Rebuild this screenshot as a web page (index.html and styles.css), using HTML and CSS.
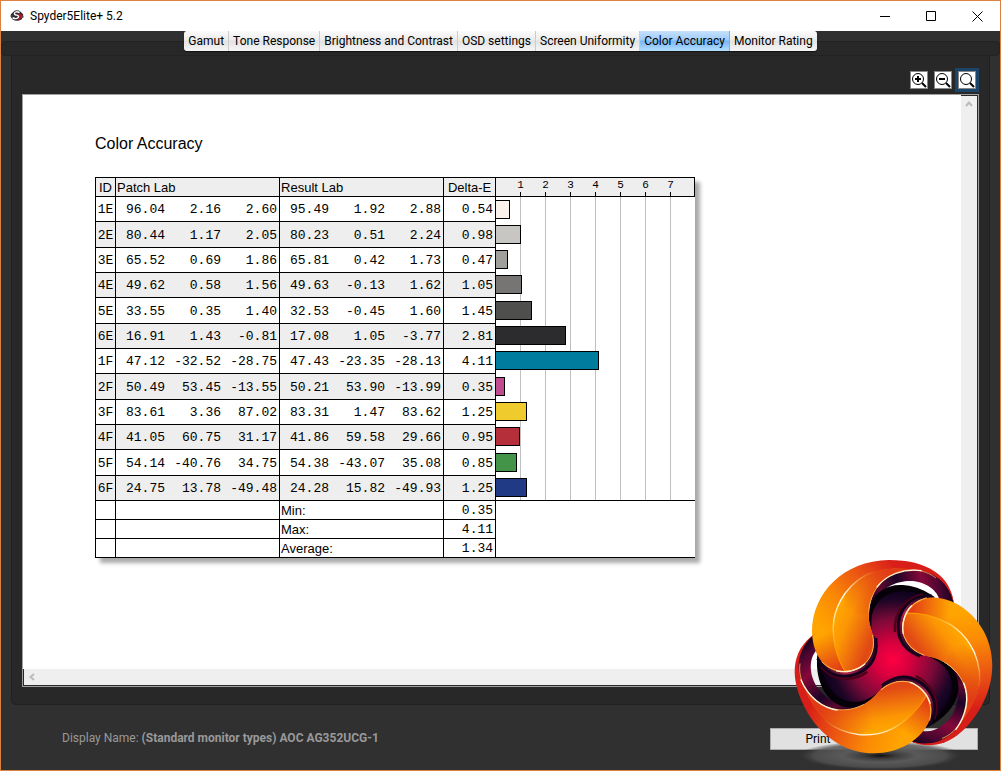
FILE: index.html
```
<!DOCTYPE html>
<html lang="en">

<head>
  <meta charset="UTF-8">
  <title>Spyder5Elite+ 5.2</title>
  <link rel="stylesheet" href="styles.css">
</head>

<body>
  <div class="window">
    <header class="titlebar">
      <svg class="app-icon" viewBox="0 0 16 16">
        <path d="M4 3 Q8 0 12 3 L15 6 Q16 9 13 12 Q8 15 3 12 Q0 9 1 6 Z" fill="#2c2a2c" />
        <path d="M9 5 L14 6 Q15 10 10 13 L9 11 Q11 9 9 8 Z" fill="#a5182c" />
        <path d="M11 4 Q6 2 5 5 Q5 7 8 7 Q11 8 9 10 Q7 12 3 10" fill="none" stroke="#fff" stroke-width="1.6" />
        <path d="M0 8 H3 M13 9 H16" stroke="#666" stroke-width="1" />
      </svg>
      <span class="app-name">Spyder5Elite+ 5.2</span>
      <div class="window-buttons">
        <button type="button" aria-label="Minimize"><svg viewBox="0 0 11 11"><path d="M0 5.5H10" /></svg></button>
        <button type="button" aria-label="Maximize"><svg viewBox="0 0 11 11"><path d="M.5 .5H9.5V9.5H.5Z" /></svg></button>
        <button type="button" aria-label="Close"><svg viewBox="0 0 11 11"><path d="M.5 .5L10.5 10.5M10.5 .5L.5 10.5" /></svg></button>
      </div>
    </header>

    <nav class="tabs">
      <div class="tab-list" role="tablist">
        <button type="button" role="tab">Gamut</button>
        <button type="button" role="tab">Tone Response</button>
        <button type="button" role="tab">Brightness and Contrast</button>
        <button type="button" role="tab">OSD settings</button>
        <button type="button" role="tab">Screen Uniformity</button>
        <button type="button" role="tab" class="active" aria-selected="true">Color Accuracy</button>
        <button type="button" role="tab">Monitor Rating</button>
      </div>
    </nav>

    <main class="panel">
      <div class="toolbar">
        <button type="button" aria-label="Zoom in"><svg viewBox="0 0 16 16"><circle cx="7" cy="7" r="5.5" /><path class="handle" d="M11 11L15 15" /><path class="sign" d="M4 7H10M7 4V10" /></svg></button>
        <button type="button" aria-label="Zoom out"><svg viewBox="0 0 16 16"><circle cx="7" cy="7" r="5.5" /><path class="handle" d="M11 11L15 15" /><path class="sign" d="M4 7H10" /></svg></button>
        <button type="button" class="focused" aria-label="Zoom to fit"><svg viewBox="0 0 16 16"><circle cx="7" cy="7" r="5.5" /><path class="handle" d="M11 11L15 15" /></svg></button>
      </div>

      <div class="viewer">
        <div class="report">
          <h1>Color Accuracy</h1>
          <table class="results">
            <colgroup>
              <col class="col-id">
              <col class="col-l"><col class="col-a"><col class="col-b">
              <col class="col-l"><col class="col-a"><col class="col-b">
              <col class="col-delta">
              <col class="col-chart">
            </colgroup>
            <thead>
              <tr>
                <th class="id">ID</th>
                <th colspan="3">Patch Lab</th>
                <th colspan="3">Result Lab</th>
                <th class="delta">Delta-E</th>
                <th class="scale"><div class="ticks"><span>1</span><span>2</span><span>3</span><span>4</span><span>5</span><span>6</span><span>7</span></div></th>
              </tr>
            </thead>
            <tbody id="patches"></tbody>
            <tfoot>
              <tr><td></td><td colspan="3"></td><th colspan="3">Min:</th><td class="num">0.35</td><td class="blank" rowspan="3"></td></tr>
              <tr><td></td><td colspan="3"></td><th colspan="3">Max:</th><td class="num">4.11</td></tr>
              <tr><td></td><td colspan="3"></td><th colspan="3">Average:</th><td class="num">1.34</td></tr>
            </tfoot>
          </table>
        </div>
        <div class="scroll-v"><button type="button" aria-label="Scroll up"><svg viewBox="0 0 8 8"><path d="M1 6L4 2.5L7 6" /></svg></button></div>
        <div class="scroll-h"><button type="button" aria-label="Scroll left"><svg viewBox="0 0 8 8"><path d="M6 1L2.5 4L6 7" /></svg></button></div>
      </div>
    </main>

    <footer class="footer">
      <p>Display Name: <strong>(Standard monitor types) AOC AG352UCG-1</strong></p>
      <div class="actions">
        <button type="button">Print</button>
        <button type="button">Close</button>
      </div>
    </footer>

    <svg class="logo" viewBox="0 0 663 663" aria-hidden="true">
      <defs>
        <radialGradient id="floor">
          <stop offset="0" stop-color="#111" />
          <stop offset=".2" stop-color="#3c3c3c" />
          <stop offset=".45" stop-color="#5a5a5a" />
          <stop offset=".8" stop-color="#525252" stop-opacity=".8" />
          <stop offset="1" stop-color="#303030" stop-opacity="0" />
        </radialGradient>
        <radialGradient id="core" gradientUnits="userSpaceOnUse" cx="338" cy="330" r="205">
          <stop offset="0" stop-color="#ff0042" />
          <stop offset=".25" stop-color="#d8003e" />
          <stop offset=".6" stop-color="#7c0a38" />
          <stop offset=".88" stop-color="#1d0526" />
          <stop offset="1" stop-color="#10021f" />
        </radialGradient>
        <linearGradient id="outer" gradientUnits="userSpaceOnUse" x1="130" y1="240" x2="350" y2="50">
          <stop offset="0" stop-color="#ffa400" />
          <stop offset=".3" stop-color="#fb8a05" />
          <stop offset=".7" stop-color="#e84e14" />
          <stop offset="1" stop-color="#d81e18" />
        </linearGradient>
        <linearGradient id="shade" gradientUnits="userSpaceOnUse" x1="120" y1="220" x2="200" y2="370">
          <stop offset=".2" stop-color="#dd2a18" stop-opacity="0" />
          <stop offset="1" stop-color="#dd2a18" />
        </linearGradient>
        <linearGradient id="inner" gradientUnits="userSpaceOnUse" x1="165" y1="190" x2="285" y2="240">
          <stop offset="0" stop-color="#ffa800" />
          <stop offset=".35" stop-color="#fc9604" />
          <stop offset="1" stop-color="#e24a15" />
        </linearGradient>
        <linearGradient id="innerTop" gradientUnits="userSpaceOnUse" x1="210" y1="190" x2="310" y2="50">
          <stop offset="0" stop-color="#e44a14" stop-opacity="0" />
          <stop offset="1" stop-color="#e03a16" />
        </linearGradient>
        <linearGradient id="ring" gradientUnits="userSpaceOnUse" x1="270" y1="160" x2="520" y2="120">
          <stop offset="0" stop-color="#170020" />
          <stop offset=".15" stop-color="#5d0a30" />
          <stop offset=".35" stop-color="#1c0426" />
          <stop offset=".65" stop-color="#85083a" />
          <stop offset=".85" stop-color="#4a0630" />
          <stop offset="1" stop-color="#0d001c" />
        </linearGradient>
        <linearGradient id="lip" gradientUnits="userSpaceOnUse" x1="130" y1="350" x2="300" y2="300">
          <stop offset="0" stop-color="#1a0424" />
          <stop offset=".35" stop-color="#b02650" />
          <stop offset=".6" stop-color="#6a0c38" />
          <stop offset="1" stop-color="#1a0424" />
        </linearGradient>
        <linearGradient id="glow" gradientUnits="userSpaceOnUse" x1="175" y1="300" x2="290" y2="60">
          <stop offset="0" stop-color="#ffd060" stop-opacity="0" />
          <stop offset=".3" stop-color="#ffe7a0" />
          <stop offset=".6" stop-color="#fff" />
          <stop offset="1" stop-color="#ffc040" stop-opacity="0" />
        </linearGradient>

        <path id="tail" fill="url(#ring)" d="M272 235 C255 165 285 90 345 66 C425 38 510 70 523 168 L478 148 C468 112 420 88 375 94 C335 100 300 118 278 170 Z" />
        <path id="body-back" fill="#060008" d="M262 270 C272 240 262 200 272 165 C285 125 325 100 375 106 C410 110 435 122 465 142 L400 170 C350 215 390 310 470 325 L338 400 Z" />
        <path id="body" fill="url(#core)" d="M255 340 C290 290 268 240 276 195 C288 146 325 126 365 124 C395 124 420 130 440 145 L375 165 C335 215 352 300 450 322 L338 430 Z" />
        <g id="lip-band" fill="none">
          <path stroke="#4d0018" stroke-width="7" d="M122 350 C160 394 220 396 262 366" />
          <path stroke="#14021c" stroke-width="24" d="M120 322 C147 382 225 386 265 338 C280 320 284 295 280 265" />
          <path stroke="url(#lip)" stroke-width="14" d="M128 330 C155 380 225 377 262 336 C280 314 284 290 278 260" />
        </g>
        <g id="arm">
          <path fill="url(#outer)" d="M523 168 C515 75 440 30 327 30 C190 32 96 130 96 245 C98 320 140 368 195 367 C250 362 280 322 281 278 C281 245 264 225 266 188 C268 130 305 80 362 64 C440 46 508 85 523 168 Z" />
          <path fill="url(#shade)" d="M96 245 C98 320 140 368 195 367 C150 290 150 220 175 160 L100 200 Z" />
          <path fill="url(#inner)" d="M195 362 C150 285 145 200 195 130 C235 78 295 48 385 57 C310 70 268 125 266 188 C264 225 281 245 281 278 C280 322 250 360 195 362 Z" />
          <path fill="url(#innerTop)" d="M195 130 C235 78 295 48 385 57 C310 70 268 125 266 188 L190 200 Z" />
          <path fill="none" stroke="url(#glow)" stroke-width="4" d="M172 310 C148 235 160 180 195 130 C220 97 250 75 285 62" />
          <path fill="none" stroke="#ffc65a" stroke-width="2" d="M266 188 C268 130 305 80 362 64 C400 54 440 62 468 84" />
          <path fill="none" stroke="#fff8dc" stroke-width="4" d="M290 112 C318 75 370 55 425 62" />
          <path fill="none" stroke="#ffb648" stroke-width="3" d="M125 335 C165 375 225 372 258 338 C280 312 284 285 278 255" />
          <path fill="none" stroke="#fff3cf" stroke-width="4" d="M168 362 C200 371 235 359 255 341" />
        </g>
      </defs>
      <ellipse cx="300" cy="617" rx="250" ry="44" fill="url(#floor)" />
      <use href="#tail" />
      <use href="#tail" transform="rotate(120 338 330)" />
      <use href="#tail" transform="rotate(240 338 330)" />
      <use href="#body-back" />
      <use href="#body-back" transform="rotate(120 338 330)" />
      <use href="#body-back" transform="rotate(240 338 330)" />
      <use href="#body" />
      <use href="#body" transform="rotate(120 338 330)" />
      <use href="#body" transform="rotate(240 338 330)" />
      <use href="#lip-band" />
      <use href="#lip-band" transform="rotate(120 338 330)" />
      <use href="#lip-band" transform="rotate(240 338 330)" />
      <use href="#arm" />
      <use href="#arm" transform="rotate(120 338 330)" />
      <use href="#arm" transform="rotate(240 338 330)" />
    </svg>
  </div>

  <script>
    // id, patch L a b, result L a b, delta-E, bar color
    const patches = [
      ['1E', '96.04', '2.16', '2.60', '95.49', '1.92', '2.88', '0.54', '#faf0ec'],
      ['2E', '80.44', '1.17', '2.05', '80.23', '0.51', '2.24', '0.98', '#c8c6c2'],
      ['3E', '65.52', '0.69', '1.86', '65.81', '0.42', '1.73', '0.47', '#a09f9b'],
      ['4E', '49.62', '0.58', '1.56', '49.63', '-0.13', '1.62', '1.05', '#777573'],
      ['5E', '33.55', '0.35', '1.40', '32.53', '-0.45', '1.60', '1.45', '#4f4f4d'],
      ['6E', '16.91', '1.43', '-0.81', '17.08', '1.05', '-3.77', '2.81', '#2c2b2d'],
      ['1F', '47.12', '-32.52', '-28.75', '47.43', '-23.35', '-28.13', '4.11', '#007c9e'],
      ['2F', '50.49', '53.45', '-13.55', '50.21', '53.90', '-13.99', '0.35', '#c14b8f'],
      ['3F', '83.61', '3.36', '87.02', '83.31', '1.47', '83.62', '1.25', '#efcb2e'],
      ['4F', '41.05', '60.75', '31.17', '41.86', '59.58', '29.66', '0.95', '#b42f3a'],
      ['5F', '54.14', '-40.76', '34.75', '54.38', '-43.07', '35.08', '0.85', '#439349'],
      ['6F', '24.75', '13.78', '-49.48', '24.28', '15.82', '-49.93', '1.25', '#213a86']
    ];
    const unit = 25;

    document.getElementById('patches').innerHTML = patches.map(p => {
      const color = p[8];
      const width = Math.round(p[7] * unit);
      const lab = p.slice(1, 7).map((v, i) => `<td class="num${i % 3 ? ' inner' : ''}">${v}</td>`).join('');
      return `<tr><td class="id">${p[0]}</td>${lab}<td class="num">${p[7]}</td>
        <td class="chart"><div class="bar" style="width:${width}px;background:${color}"></div></td></tr>`;
    }).join('');
  </script>
</body>

</html>
```
FILE: styles.css
```
* {
  box-sizing: border-box;
}

body {
  margin: 0;
  font-family: Roboto, "Open Sans", sans-serif;
  font-size: 12px;
  color: #000;
}

button {
  font: inherit;
  padding: 0;
  border: none;
  background: none;
  color: inherit;
}

.window {
  position: relative;
  display: flex;
  flex-direction: column;
  min-height: 100vh;
  border: 1px solid #dc8240;
  background: #303030;
}

.titlebar {
  display: flex;
  align-items: center;
  height: 30px;
  padding-left: 8px;
  background: #fff;
}

.app-icon {
  width: 16px;
  height: 14px;
}

.app-name {
  margin-left: 5px;
}

.window-buttons {
  display: flex;
  margin-left: auto;
}

.window-buttons button {
  display: flex;
  align-items: center;
  justify-content: center;
  width: 46px;
  height: 30px;
}

.window-buttons svg {
  width: 11px;
  height: 11px;
  fill: none;
  stroke: #000;
}

/* tabs */
.tabs {
  position: relative;
  display: flex;
  justify-content: center;
  height: 25px;
}

.tabs::before {
  content: "";
  position: absolute;
  top: 10px;
  right: 0;
  bottom: 0;
  left: 0;
  border: 1px solid #222;
  border-radius: 4px;
  background: #282828;
}

.tab-list {
  position: relative;
  display: flex;
  height: 20px;
  border-radius: 3px;
  background: linear-gradient(#fbfbfb, #ececec 45%, #e2e2e2 50%, #f6f6f6);
  box-shadow: 0 1px 1px #111;
  overflow: hidden;
}

.tab-list button {
  padding: 0 4px;
  border-right: 1px solid #ccc;
  white-space: nowrap;
}

.tab-list button:last-child {
  border-right: none;
}

.tab-list .active {
  background: linear-gradient(#c4e0fc, #a0cdf9 45%, #78b5f5 50%, #b4e0ff);
  border-right-color: #7ab0e8;
}

/* main panel */
.panel {
  flex: 1;
  display: flex;
  flex-direction: column;
  margin: 0 10px;
  padding: 15px 10px 17px;
  border: 1px solid #202020;
  border-top: none;
  border-radius: 0 0 5px 5px;
  background: #282828;
}

.toolbar {
  display: flex;
  justify-content: flex-end;
  gap: 6px;
  margin-bottom: 5px;
  padding-right: 3px;
}

.toolbar button {
  width: 18px;
  height: 18px;
  border: 1px solid #888;
  background: #fff;
}

.toolbar .focused {
  outline: 3px solid #1a4468;
}

.toolbar svg {
  display: block;
  width: 16px;
  height: 16px;
  fill: none;
  stroke: #000;
}

.toolbar .handle,
.toolbar .sign {
  stroke-width: 2;
}

.viewer {
  flex: 1;
  display: grid;
  grid-template-columns: 1fr 17px;
  grid-template-rows: 1fr 17px;
  border: 1px solid #a0a0a0;
  background: #fff;
}

.scroll-v,
.scroll-h {
  display: flex;
  background: #efefef;
  color: #bbb;
}

.scroll-v {
  flex-direction: column;
  border-top: 1px solid #282828;
  border-right: 1px solid #282828;
}

.scroll-h {
  grid-column: 1 / 3;
  border-bottom: 1px solid #282828;
  border-left: 1px solid #282828;
}

.scroll-v button,
.scroll-h button {
  display: flex;
  align-items: center;
  justify-content: center;
  height: 16px;
}

.scroll-h button {
  width: 16px;
}

.scroll-v svg,
.scroll-h svg {
  width: 8px;
  height: 8px;
  fill: none;
  stroke: currentColor;
  stroke-width: 2;
}

/* report */
.report {
  padding: 39px 72px;
  font-family: "Liberation Sans", Arial, sans-serif;
}

.report h1 {
  margin: 0 0 23px;
  font-size: 16px;
  font-weight: normal;
  line-height: 20px;
}

.results {
  table-layout: fixed;
  width: 600px;
  border-spacing: 0;
  border-bottom: 1px solid #000;
  background: #fff;
  box-shadow: 5px 5px 4px #aaa;
  font-size: 13px;
  line-height: 17px;
}

.col-id {
  width: 20px;
}

.col-l {
  width: 52px;
}

.col-a,
.col-b {
  width: 56px;
}

.col-delta {
  width: 52px;
}

.results th,
.results td {
  height: 19px;
  padding: 1px 0 0 1px;
  border-top: 1px solid #000;
  border-left: 1px solid #000;
  font-weight: normal;
  text-align: left;
  white-space: nowrap;
}

.results thead {
  background: #eee;
}

.results .id,
.results .delta {
  padding: 1px 0 0;
  text-align: center;
}

.results tbody td {
  height: 25px;
}

.results tbody tr:nth-child(3n + 2) td {
  height: 26px;
}

.results tbody tr:nth-child(even) {
  background: #eee;
}

.results tbody .id,
.results .num {
  font-family: "Liberation Mono", "Courier New", monospace;
}

.results .num {
  padding: 1px 2px 0 0;
  text-align: right;
}

.results .inner {
  border-left: none;
}

.results .scale {
  padding: 0;
  border-right: 1px solid #000;
  background: repeating-linear-gradient(90deg, transparent 0 24px, #000 24px 25px) 0 100% / 175px 4px no-repeat;
}

.ticks {
  display: flex;
  height: 18px;
  padding-left: 12px;
  font-family: "Liberation Mono", "Courier New", monospace;
  font-size: 11px;
  line-height: 14px;
}

.ticks span {
  width: 25px;
  text-align: center;
}

.results .chart {
  padding: 0;
  background: repeating-linear-gradient(90deg, transparent 0 24px, #c0c0c0 24px 25px) 0 0 / 175px 100% no-repeat #fff;
}

.results tbody tr + tr .chart {
  border-top: none;
}

.bar {
  height: 19px;
  border: 1px solid #000;
  border-left: none;
}

.results .blank {
  background: #fff;
}

/* footer */
.footer {
  display: flex;
  justify-content: space-between;
  align-items: flex-start;
  height: 65px;
  padding: 23px 22px 0 61px;
}

.footer p {
  margin: 0;
  line-height: 20px;
  color: #999;
}

.actions {
  display: flex;
  gap: 16px;
}

.actions button {
  width: 96px;
  height: 22px;
  border: 1px solid #adadad;
  background: #e1e1e1;
}

.logo {
  position: absolute;
  right: -1px;
  bottom: -1px;
  width: 221px;
  height: 221px;
  pointer-events: none;
}
```
